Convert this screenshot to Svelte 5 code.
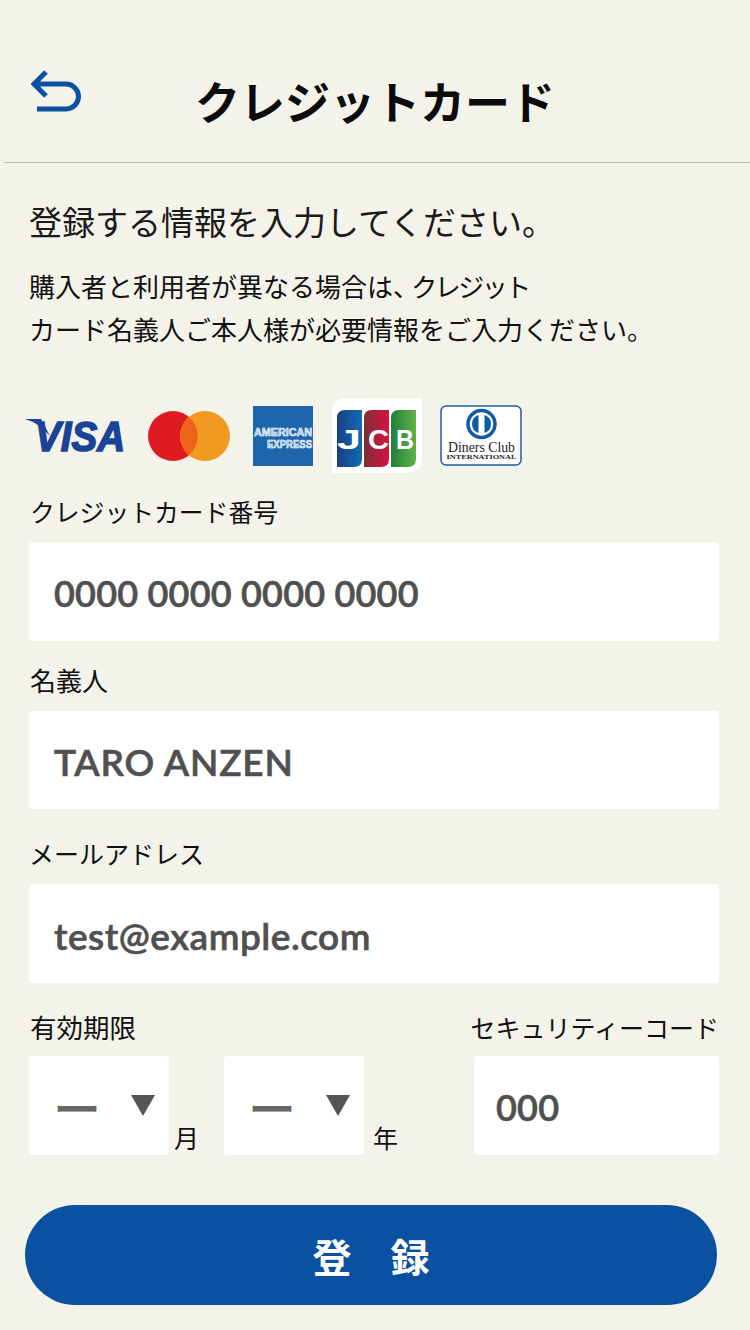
<script>
  let cardNumber = "0000 0000 0000 0000";
  let holder = "TARO ANZEN";
  let email = "test@example.com";
  let code = "000";
</script>

<div class="page">
  <header class="header">
    <svg class="back" viewBox="0 0 54 46" width="54" height="46">
      <path d="M15 3 L3 15 L15 27 M3 15 H35 A12.5 12.5 0 0 1 35 40 H6" fill="none" stroke="#0a52a1" stroke-width="5" />
    </svg>
    <h1 class="title">クレジットカード</h1>
  </header>

  <main class="content">
    <p class="lead">登録する情報を入力してください。</p>
    <p class="note">購入者と利用者が異なる場合は<span class="comma">、</span><span class="tight">クレジット</span><br />カード名義人ご本人様が必要情報をご入力ください。</p>

    <div class="brands">
      <svg class="visa" viewBox="0 0 112 56" width="112" height="56">
        <path d="M1 11 H17 L26 28 Q15 15 1 11Z" fill="#1b4398" />
        <text x="11" y="43" class="visa-text" textLength="90" lengthAdjust="spacingAndGlyphs">VISA</text>
      </svg>
      <svg class="master" viewBox="0 0 82 50" width="82" height="50">
        <circle cx="25" cy="25" r="25" fill="#e01a22" />
        <circle cx="57" cy="25" r="25" fill="#f09a21" />
        <path d="M41 6 A25 25 0 0 1 41 44 A25 25 0 0 1 41 6Z" fill="#ee621c" />
      </svg>
      <svg class="amex" viewBox="0 0 80 60" width="80" height="60">
        <rect width="60" height="60" fill="#1d66ac" />
        <text x="1" y="30" class="amex-text" textLength="58" lengthAdjust="spacingAndGlyphs">AMERICAN</text>
        <text x="14" y="42" class="amex-text" textLength="45" lengthAdjust="spacingAndGlyphs">EXPRESS</text>
      </svg>
      <svg class="jcb" viewBox="0 0 90 75" width="90" height="75">
        <defs>
          <linearGradient id="jcb-blue"><stop offset="0" stop-color="#1c3f83" /><stop offset="1" stop-color="#0f6cb5" /></linearGradient>
          <linearGradient id="jcb-red"><stop offset="0" stop-color="#7d3038" /><stop offset="1" stop-color="#db1143" /></linearGradient>
          <linearGradient id="jcb-green"><stop offset="0" stop-color="#1f7f3c" /><stop offset="1" stop-color="#62b246" /></linearGradient>
        </defs>
        <path d="M14 0 H90 V60 Q90 75 74 75 H0 V14 Q0 0 14 0Z" fill="#fff" />
        <path d="M13 12 H30 V61 Q30 69 22 69 H5 V20 Q5 12 13 12Z" fill="url(#jcb-blue)" />
        <path d="M40 12 H57 V61 Q57 69 49 69 H32 V20 Q32 12 40 12Z" fill="url(#jcb-red)" />
        <path d="M67 12 H84 V61 Q84 69 76 69 H59 V20 Q59 12 67 12Z" fill="url(#jcb-green)" />
        <text x="5" y="51" class="jcb-text" textLength="24" lengthAdjust="spacingAndGlyphs">J</text>
        <text x="36" y="51" class="jcb-text" textLength="21" lengthAdjust="spacingAndGlyphs">C</text>
        <text x="64" y="51" class="jcb-text" textLength="18" lengthAdjust="spacingAndGlyphs">B</text>
      </svg>
      <svg class="diners" viewBox="0 0 82 61" width="82" height="61">
        <rect x="1" y="1" width="80" height="59" rx="5" fill="#fff" stroke="#1d5fa8" stroke-width="1.5" />
        <circle cx="41.5" cy="19" r="13.5" fill="#fff" stroke="#0f5aa6" stroke-width="3.5" />
        <path d="M38.5 10 A9.5 9.5 0 0 0 38.5 28Z M44.5 10 A9.5 9.5 0 0 1 44.5 28Z" fill="#0f5aa6" />
        <text x="8" y="46.5" class="diners-text" textLength="67" lengthAdjust="spacingAndGlyphs">Diners Club</text>
        <text x="6.5" y="53.5" class="diners-small" textLength="70" lengthAdjust="spacingAndGlyphs">INTERNATIONAL</text>
      </svg>
    </div>

    <div class="label first">クレジットカード番号</div>
    <div class="input digits">{cardNumber}</div>

    <div class="label second">名義人</div>
    <div class="input short">{holder}</div>

    <div class="label third">メールアドレス</div>
    <div class="input mail">{email}</div>

    <div class="expiry-labels">
      <span class="label period">有効期限</span>
      <span class="label">セキュリティーコード</span>
    </div>
    <div class="expiry">
      <div class="select"><span class="dash">ー</span><span class="arrow"></span></div>
      <span class="unit month">月</span>
      <div class="select"><span class="dash">ー</span><span class="arrow"></span></div>
      <span class="unit year">年</span>
      <div class="input digits code">{code}</div>
    </div>

    <button class="submit">登　録</button>
  </main>
</div>

<style>
  :global(body) {
    margin: 0;
    background-color: #f3f3ea;
  }

  .page {
    width: 750px;
    height: 1330px;
    overflow: hidden;
    font-family: "Noto Sans CJK JP", "Noto Sans", sans-serif;
    color: #111;
  }

  .header {
    display: flex;
    align-items: center;
    justify-content: center;
    position: relative;
    height: 163px;
    margin-left: 4px;
    padding-top: 40px;
    box-sizing: border-box;
    border-bottom: 1px solid #b9b9b5;
  }

  .back {
    position: absolute;
    left: 27px;
    top: 69px;
  }

  .title {
    margin: 0 0 0 -4px;
    font-size: 45px;
    font-weight: 700;
    line-height: 60px;
    color: #0b0b0b;
  }

  .content {
    padding: 0 31px 0 29px;
  }

  p {
    margin: 0;
  }

  .lead {
    margin-top: 36px;
    font-size: 33px;
    line-height: 44px;
    white-space: nowrap;
    color: #1a1a1a;
  }

  .note {
    margin-top: 21px;
    font-size: 26px;
    line-height: 43px;
    white-space: nowrap;
    color: #111;
  }

  .comma {
    letter-spacing: -0.3em;
  }

  .tight {
    letter-spacing: -2.5px;
  }

  .brands {
    display: flex;
    align-items: center;
    height: 75px;
    margin-top: 48px;
    margin-left: -5px;
  }

  .visa { margin-right: 12px; }
  .master { margin-right: 23px; }
  .amex { margin-right: -1px; }
  .jcb { margin-right: 18px; }

  .visa-text {
    font-family: "Liberation Sans", sans-serif;
    font-size: 42px;
    font-weight: 700;
    font-style: italic;
    fill: #1b4398;
    stroke: #1b4398;
    stroke-width: 1.6px;
  }

  .amex-text {
    font-family: "Liberation Sans", sans-serif;
    font-size: 11.5px;
    font-weight: 700;
    fill: #9fc3e4;
    stroke: #fff;
    stroke-width: 0.6px;
  }

  .jcb-text {
    font-family: "Liberation Sans", sans-serif;
    font-size: 27px;
    font-weight: 700;
    fill: #fff;
  }

  .diners-text {
    font-family: "Liberation Serif", serif;
    font-size: 15px;
    fill: #222;
  }

  .diners-small {
    font-family: "Liberation Serif", serif;
    font-size: 7px;
    font-weight: 700;
    fill: #222;
  }

  .label {
    display: block;
    font-size: 25px;
    line-height: 36px;
    white-space: nowrap;
    color: #111;
  }

  .first { margin-top: 20px; margin-bottom: 13px; font-size: 24.8px; padding-left: 1px; }
  .second { margin-top: 21px; margin-bottom: 13px; font-size: 26px; padding-left: 1px; }
  .third { margin-top: 26px; margin-bottom: 13px; }
  .period { font-size: 26.5px; padding-left: 1px; }

  .input {
    display: flex;
    align-items: center;
    height: 99px;
    padding-left: 25px;
    padding-top: 3px;
    box-sizing: border-box;
    background-color: #fff;
    border-radius: 4px;
    font-family: Lato, "Noto Sans", sans-serif;
    font-size: 37px;
    font-weight: 600;
    -webkit-text-stroke: 0.6px #505050;
    letter-spacing: 0.8px;
    color: #505050;
  }

  .digits {
    font-size: 36px;
    letter-spacing: 0.2px;
  }

  .mail {
    letter-spacing: 0.5px;
  }

  .short { height: 98px; }

  .expiry-labels {
    display: flex;
    justify-content: space-between;
    margin-top: 26px;
    margin-bottom: 11px;
  }

  .expiry {
    display: flex;
    align-items: flex-end;
  }

  .select {
    display: flex;
    align-items: center;
    justify-content: space-between;
    width: 140px;
    height: 99px;
    padding: 0 14px 0 24px;
    box-sizing: border-box;
    background-color: #fff;
    border-radius: 4px;
  }

  .dash {
    font-size: 48px;
    font-weight: 500;
    line-height: 50px;
    color: #666;
  }

  .arrow {
    width: 0;
    height: 0;
    border-left: 12px solid transparent;
    border-right: 12px solid transparent;
    border-top: 21px solid #555;
  }

  .unit {
    font-size: 25px;
    line-height: 36px;
    color: #111;
    box-sizing: border-box;
  }

  .month { width: 55px; padding-left: 5px; }
  .year { width: 110px; padding-left: 9px; }

  .code {
    width: 245px;
    padding-left: 22px;
  }

  .submit {
    display: block;
    width: 692px;
    height: 100px;
    margin: 50px 0 0 -4px;
    border: none;
    border-radius: 50px;
    background-color: #0a51a1;
    color: #fff;
    font-family: "Noto Sans CJK JP", sans-serif;
    font-size: 39px;
    font-weight: 700;
  }
</style>
